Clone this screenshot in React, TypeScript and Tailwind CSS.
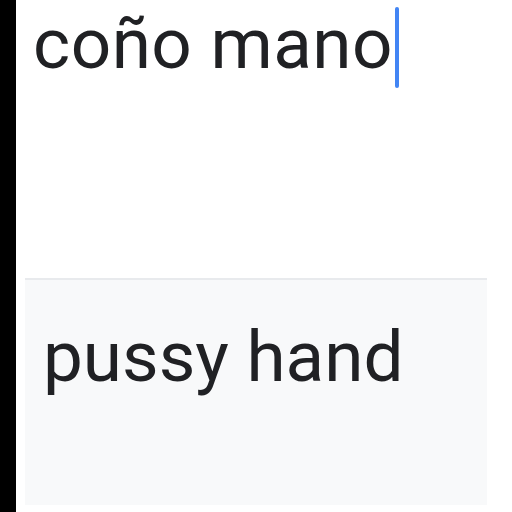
export default function App() {
  return (
    <div className="flex h-[512px] w-[512px] overflow-hidden bg-white">
      <div className="w-4 shrink-0 bg-black" />
      <div className="flex flex-1 flex-col pl-[9px] pr-[25px]">
        <div className="h-[278px] pt-[7px]">
          <div className="flex items-start pl-[8px] font-['Roboto',sans-serif] text-[71px] text-[#202124]">
            <span className="-mt-[4px] leading-[81px] tracking-[0.5px]">coño mano</span>
            <span className="ml-[2px] h-[81px] w-[4px] rounded-sm bg-[#4285f4]" />
          </div>
        </div>
        <div className="h-[227px] border-t-2 border-[#e8eaed] bg-[#f8f9fa] pl-[18px] pt-[36px]">
          <p className="font-['Roboto',sans-serif] text-[71px] leading-[81px] text-[#202124]">pussy hand</p>
        </div>
      </div>
    </div>
  );
}
